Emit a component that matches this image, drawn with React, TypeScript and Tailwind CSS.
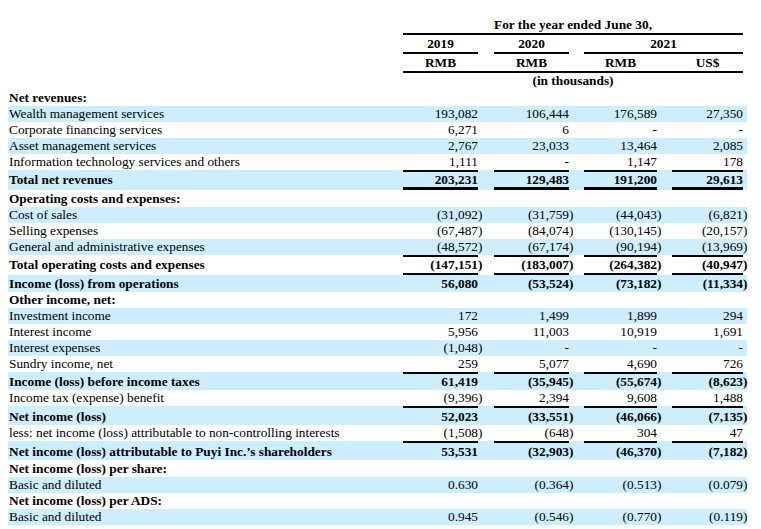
import clsx from "clsx";

type Row = {
  label: string;
  vals?: string[];
  bold?: boolean;
  blue?: boolean;
  top?: boolean;
  bottom?: "single" | "double";
  h?: 15 | 16 | 17;
};

const rows: Row[] = [
  { label: "Net revenues:", bold: true, h: 17 },
  { label: "Wealth management services", vals: ["193,082", "106,444", "176,589", "27,350"], blue: true },
  { label: "Corporate financing services", vals: ["6,271", "6", "-", "-"] },
  { label: "Asset management services", vals: ["2,767", "23,033", "13,464", "2,085"], blue: true },
  { label: "Information technology services and others", vals: ["1,111", "-", "1,147", "178"] },
  { label: "Total net revenues", vals: ["203,231", "129,483", "191,200", "29,613"], bold: true, blue: true, top: true, bottom: "double", h: 15 },
  { label: "Operating costs and expenses:", bold: true, h: 17 },
  { label: "Cost of sales", vals: ["(31,092)", "(31,759)", "(44,043)", "(6,821)"], blue: true },
  { label: "Selling expenses", vals: ["(67,487)", "(84,074)", "(130,145)", "(20,157)"] },
  { label: "General and administrative expenses", vals: ["(48,572)", "(67,174)", "(90,194)", "(13,969)"], blue: true },
  { label: "Total operating costs and expenses", vals: ["(147,151)", "(183,007)", "(264,382)", "(40,947)"], bold: true, top: true, bottom: "single" },
  { label: "Income (loss) from operations", vals: ["56,080", "(53,524)", "(73,182)", "(11,334)"], bold: true, blue: true, h: 17 },
  { label: "Other income, net:", bold: true },
  { label: "Investment income", vals: ["172", "1,499", "1,899", "294"], blue: true },
  { label: "Interest income", vals: ["5,956", "11,003", "10,919", "1,691"] },
  { label: "Interest expenses", vals: ["(1,048)", "-", "-", "-"], blue: true },
  { label: "Sundry income, net", vals: ["259", "5,077", "4,690", "726"] },
  { label: "Income (loss) before income taxes", vals: ["61,419", "(35,945)", "(55,674)", "(8,623)"], bold: true, blue: true, top: true },
  { label: "Income tax (expense) benefit", vals: ["(9,396)", "2,394", "9,608", "1,488"] },
  { label: "Net income (loss)", vals: ["52,023", "(33,551)", "(46,066)", "(7,135)"], bold: true, blue: true, top: true, h: 17 },
  { label: "less: net income (loss) attributable to non-controlling interests", vals: ["(1,508)", "(648)", "304", "47"] },
  { label: "Net income (loss) attributable to Puyi Inc.’s shareholders", vals: ["53,531", "(32,903)", "(46,370)", "(7,182)"], bold: true, blue: true, top: true, h: 17 },
  { label: "Net income (loss) per share:", bold: true, h: 17 },
  { label: "Basic and diluted", vals: ["0.630", "(0.364)", "(0.513)", "(0.079)"], blue: true },
  { label: "Net income (loss) per ADS:", bold: true },
  { label: "Basic and diluted", vals: ["0.945", "(0.546)", "(0.770)", "(0.119)"], blue: true },
  { label: "Weighted average number of shares used in computation:", bold: true, h: 17 },
];

const grid = "grid grid-cols-[395px_75px_16px_75px_15px_73px_15px_71px_4px]";

const leading = {
  15: "leading-[15px]",
  16: "leading-[16px]",
  17: "leading-[17px]",
};

// closing paren hangs past the column edge, like the filing does
function Num({ v }: { v: string }) {
  if (v.endsWith(")")) {
    return (
      <>
        {v.slice(0, -1)}
        <span className="inline-block w-0 text-left">)</span>
      </>
    );
  }
  return <>{v}</>;
}

function TableRow({ row }: { row: Row }) {
  const rules = (visible: boolean) =>
    clsx(
      visible ? "border-black" : "border-transparent",
      row.top && "border-t-2",
      row.bottom === "single" && "border-b-2",
      row.bottom === "double" && "border-b-[3px]"
    );
  return (
    <div className={clsx(grid, row.blue && "bg-[#cceeff]", row.bold && "font-bold", leading[row.h ?? 16])}>
      <div className={clsx("pl-px whitespace-nowrap", rules(false))}>{row.label}</div>
      {[0, 1, 2, 3].map((i) => (
        <div key={i} className="contents">
          <div className={clsx("text-right whitespace-nowrap", rules(true))}>
            {row.vals ? <Num v={row.vals[i]} /> : null}
          </div>
          {i < 3 && <div />}
        </div>
      ))}
      <div />
    </div>
  );
}

export default function App() {
  return (
    <div className="bg-white text-black h-[529px] overflow-hidden pl-2 pt-4 text-[13.33px] font-['Liberation_Serif','Times_New_Roman',serif]">
      <div className="w-[739px]">
        {/* column heads */}
        <div className={clsx(grid, "font-bold leading-[17px]")}>
          <div />
          <div className="col-span-7 text-center border-b-2 border-black">For the year ended June 30,</div>
          <div />
        </div>
        <div className={clsx(grid, "font-bold leading-[17px]")}>
          <div />
          <div className="text-center border-b-2 border-black">2019</div>
          <div />
          <div className="text-center border-b-2 border-black">2020</div>
          <div />
          <div className="col-span-3 text-center border-b-2 border-black">2021</div>
          <div />
        </div>
        <div className={clsx(grid, "font-bold leading-[17px]")}>
          <div />
          <div className="text-center border-b-2 border-black">RMB</div>
          <div className="border-b-2 border-black" />
          <div className="text-center border-b-2 border-black">RMB</div>
          <div className="border-b-2 border-black" />
          <div className="text-center border-b-2 border-black">RMB</div>
          <div className="border-b-2 border-black" />
          <div className="text-center border-b-2 border-black">US$</div>
          <div />
        </div>
        <div className={clsx(grid, "font-bold leading-[16px]")}>
          <div />
          <div className="col-span-7 text-center">(in thousands)</div>
          <div />
        </div>

        {rows.map((r, i) => (
          <TableRow key={i} row={r} />
        ))}
      </div>
    </div>
  );
}
